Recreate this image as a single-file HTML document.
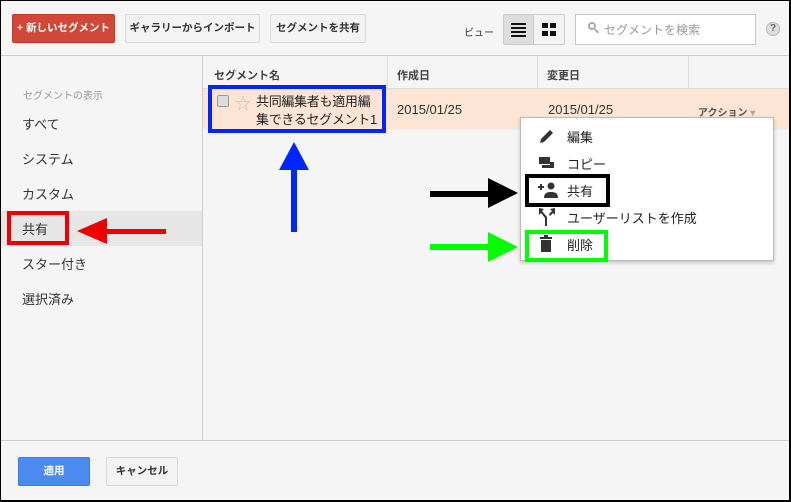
<!DOCTYPE html>
<html><head><meta charset="utf-8"><style>
*{box-sizing:border-box;margin:0;padding:0}
body{width:791px;height:502px;position:relative;overflow:hidden;background:#f5f5f5;font-family:"Liberation Sans","Noto Sans CJK JP",sans-serif;color:#222}
.a{position:absolute}
.btn{position:absolute;height:29px;border:1px solid #d9d9d9;border-radius:2px;background:#f3f3f3;font-size:10.5px;font-weight:bold;color:#333;text-align:center;line-height:27px;white-space:nowrap}
.side{font-size:13px;color:#333}
.hd{font-size:11px;font-weight:bold;color:#444}
.mi{font-size:13px;color:#222}
</style></head><body>
<div class="a" style="left:0;top:0;width:791px;height:502px;border:1px solid #000;border-width:1px 2px 2px 1px;z-index:50;pointer-events:none"></div>
<!-- top bar -->
<div class="btn" style="left:12px;top:14px;width:103px;background:#d14836;border-color:#c53727;color:#fff">+ 新しいセグメント</div>
<div class="btn" style="left:125px;top:14px;width:135px">ギャラリーからインポート</div>
<div class="btn" style="left:270px;top:14px;width:96px">セグメントを共有</div>
<div class="a" style="left:464px;top:24px;font-size:10px;color:#333">ビュー</div>
<div class="a" style="left:503px;top:14px;width:62px;height:31px;border:1px solid #ccc;border-radius:2px;background:#f3f3f3"></div>
<div class="a" style="left:504px;top:15px;width:30px;height:29px;background:#ddd;border-right:1px solid #ccc"></div>
<div class="a" style="left:511px;top:23px;width:15px;height:2px;background:#111"></div>
<div class="a" style="left:511px;top:27px;width:15px;height:2px;background:#111"></div>
<div class="a" style="left:511px;top:31px;width:15px;height:2px;background:#111"></div>
<div class="a" style="left:511px;top:35px;width:15px;height:2px;background:#111"></div>
<div class="a" style="left:542px;top:23px;width:6px;height:5px;background:#111"></div>
<div class="a" style="left:550px;top:23px;width:6px;height:5px;background:#111"></div>
<div class="a" style="left:542px;top:31px;width:6px;height:5px;background:#111"></div>
<div class="a" style="left:550px;top:31px;width:6px;height:5px;background:#111"></div>
<div class="a" style="left:575px;top:14px;width:181px;height:31px;border:1px solid #c8c8c8;background:#fff"></div>
<div class="a" style="left:588px;top:22px;width:8px;height:8px;border:2px solid #aaa;border-radius:50%"></div>
<div class="a" style="left:594px;top:30px;width:5px;height:2px;background:#aaa;transform:rotate(45deg)"></div>
<div class="a" style="left:604px;top:21px;font-size:12px;color:#999">セグメントを検索</div>
<div class="a" style="left:766px;top:22px;width:14px;height:14px;border-radius:50%;background:#ddd;border:1px solid #bbb;font-size:10px;font-weight:bold;color:#666;text-align:center;line-height:12px">?</div>
<div class="a" style="left:0;top:55px;width:791px;height:1px;background:#ccc"></div>
<!-- sidebar -->
<div class="a" style="left:202px;top:56px;width:1px;height:384px;background:#ccc"></div>
<div class="a" style="left:23px;top:87px;font-size:10px;color:#999">セグメントの表示</div>
<div class="a side" style="left:22px;top:114px">すべて</div>
<div class="a side" style="left:22px;top:149px">システム</div>
<div class="a side" style="left:22px;top:184px">カスタム</div>
<div class="a" style="left:1px;top:211px;width:201px;height:35px;background:#e6e6e6"></div>
<div class="a side" style="left:22px;top:219px">共有</div>
<div class="a side" style="left:22px;top:254px">スター付き</div>
<div class="a side" style="left:22px;top:289px">選択済み</div>
<div class="a" style="left:7px;top:211px;width:62px;height:34px;border:4px solid #e00"></div>
<div class="a" style="left:106px;top:229px;width:60px;height:5px;background:#e00"></div>
<div class="a" style="left:77px;top:218px;width:0;height:0;border-top:13px solid transparent;border-bottom:13px solid transparent;border-right:30px solid #e00"></div>
<!-- table -->
<div class="a" style="left:203px;top:56px;width:588px;height:33px;background:#f5f5f5;border-bottom:1px solid #ddd"></div>
<div class="a" style="left:387px;top:56px;width:1px;height:33px;background:#ddd"></div>
<div class="a" style="left:537px;top:56px;width:1px;height:33px;background:#ddd"></div>
<div class="a" style="left:688px;top:56px;width:1px;height:33px;background:#ddd"></div>
<div class="a hd" style="left:214px;top:67px">セグメント名</div>
<div class="a hd" style="left:397px;top:67px">作成日</div>
<div class="a hd" style="left:547px;top:67px">変更日</div>
<div class="a" style="left:203px;top:89px;width:588px;height:41px;background:#fce5d4;border-bottom:1px solid #eee"></div>
<div class="a" style="left:217px;top:95px;width:12px;height:12px;border:1px solid #999;border-radius:2px;background:#ddd"></div>
<div class="a" style="left:235px;top:90px;font-size:16px;color:#d8b8a8">☆</div>
<div class="a" style="left:256px;top:93px;font-size:13px;line-height:18px;white-space:nowrap;letter-spacing:-0.3px">共同編集者も適用編<br>集できるセグメント1</div>
<div class="a" style="left:208px;top:85px;width:178px;height:48px;border:4px solid #0026ff"></div>
<div class="a" style="left:397px;top:102px;font-size:13px;color:#333">2015/01/25</div>
<div class="a" style="left:548px;top:102px;font-size:13px;color:#333">2015/01/25</div>
<div class="a" style="left:698px;top:104px;font-size:10px;font-weight:bold;color:#555">アクション <span style="color:#aaa">▾</span></div>
<div class="a" style="left:291px;top:165px;width:6px;height:67px;background:#0026ff"></div>
<div class="a" style="left:279px;top:142px;width:0;height:0;border-left:15px solid transparent;border-right:15px solid transparent;border-bottom:28px solid #0026ff"></div>
<!-- menu -->
<div class="a" style="left:520px;top:117px;width:254px;height:144px;background:#fff;border:1px solid #bbb;box-shadow:0 2px 4px rgba(0,0,0,.2)"></div>
<svg class="a" style="left:538px;top:127px" width="18" height="18" viewBox="0 0 18 18"><path d="M2 16l1-4L12 3l3 3-9 9z" fill="#333"/></svg>
<div class="a mi" style="left:567px;top:127px">編集</div>
<svg class="a" style="left:538px;top:155px" width="18" height="16"><rect x="1" y="2" width="11" height="7" fill="#333"/><rect x="4" y="7" width="12" height="6" fill="#333"/><rect x="3" y="9" width="9" height="1" fill="#fff"/></svg>
<div class="a mi" style="left:567px;top:154px">コピー</div>
<svg class="a" style="left:536px;top:181px" width="22" height="18"><path d="M2 6h6M5 3v6" stroke="#333" stroke-width="2"/><circle cx="15" cy="5" r="3.5" fill="#333"/><path d="M8 17c0-5 3-6 7-6s7 1 7 6z" fill="#333"/></svg>
<div class="a mi" style="left:567px;top:181px">共有</div>
<div class="a" style="left:525px;top:174px;width:85px;height:33px;border:4px solid #000"></div>
<svg class="a" style="left:538px;top:207px" width="18" height="20"><path d="M1 1l5 1-2 2 5 6v9H7v-8L3 6 1 8zM17 1l-5 1 2 2-3 3 1 2 3-3 2 2z" fill="#333"/></svg>
<div class="a mi" style="left:567px;top:208px">ユーザーリストを作成</div>
<svg class="a" style="left:539px;top:235px" width="16" height="18"><rect x="1" y="2" width="12" height="2" fill="#333"/><rect x="5" y="0" width="4" height="2" fill="#333"/><rect x="2" y="5" width="10" height="12" fill="#333"/></svg>
<div class="a mi" style="left:567px;top:235px">削除</div>
<div class="a" style="left:525px;top:230px;width:83px;height:32px;border:4px solid #0f0"></div>
<div class="a" style="left:430px;top:191px;width:62px;height:6px;background:#000"></div>
<div class="a" style="left:488px;top:178px;width:0;height:0;border-top:15px solid transparent;border-bottom:15px solid transparent;border-left:30px solid #000"></div>
<div class="a" style="left:430px;top:244px;width:62px;height:6px;background:#0f0"></div>
<div class="a" style="left:488px;top:232px;width:0;height:0;border-top:15px solid transparent;border-bottom:15px solid transparent;border-left:30px solid #0f0"></div>
<!-- footer -->
<div class="a" style="left:0;top:440px;width:791px;height:1px;background:#ccc"></div>
<div class="btn" style="left:18px;top:457px;width:72px;background:#4d8af0;border-color:#3b7be6;color:#fff">適用</div>
<div class="btn" style="left:106px;top:457px;width:72px">キャンセル</div>
</body></html>
